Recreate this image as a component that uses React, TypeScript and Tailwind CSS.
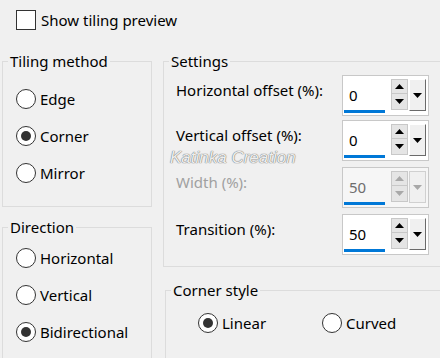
import type { ReactNode } from 'react'

const font = { fontFamily: '"Noto Sans", "Open Sans", sans-serif' }

function Radio({ label, checked }: { label: string; checked?: boolean }) {
  return (
    <div className="flex h-5 items-center gap-[4px]">
      <span className="flex h-5 w-5 shrink-0 items-center justify-center rounded-full border border-[#333333] bg-white">
        {checked && <span className="h-[10px] w-[10px] rounded-full bg-[#333333]" />}
      </span>
      <span className="text-[15px] leading-5 text-black">{label}</span>
    </div>
  )
}

// legend sits on the border; padding goes on the inner div so the title stays put
function Group({ title, className, inner, children }: { title: string; className?: string; inner?: string; children: ReactNode }) {
  return (
    <fieldset className={`border border-[#dcdcdc] ${className ?? ''}`}>
      <legend className="ml-[5px] px-[2px] text-[15px] leading-5 text-black">{title}</legend>
      <div className={inner}>{children}</div>
    </fieldset>
  )
}

function Tri({ up, color }: { up?: boolean; color: string }) {
  return (
    <svg width="9" height="5" viewBox="0 0 9 5">
      <polygon points={up ? '0,5 9,5 4.5,0' : '0,0 9,0 4.5,5'} fill={color} />
    </svg>
  )
}

function Spin({ value, disabled }: { value: string; disabled?: boolean }) {
  const arrow = disabled ? '#a8a8a8' : '#000000'
  return (
    <div className={`flex h-[41px] w-[87px] border border-[#c8c8c8] ${disabled ? 'bg-[#f6f6f6]' : 'bg-white'}`}>
      <div className="flex w-[48px] flex-col pl-[1px]">
        <span className={`flex-1 pl-[5px] pt-[9px] text-[15px] leading-5 ${disabled ? 'text-[#6d6d6d]' : 'text-black'}`}>
          {value}
        </span>
        <span className="mb-[2px] h-[3px] w-[41px] bg-[#0078d7]" />
      </div>
      <div className="mt-[3px] flex flex-col">
        <span className="flex h-[15px] w-[17px] items-center justify-center border border-[#c8c8c8] bg-[#e5e5e5]">
          <Tri up color={arrow} />
        </span>
        <span className="flex h-[16px] w-[17px] items-center justify-center border border-t-0 border-[#c8c8c8] bg-[#e5e5e5]">
          <Tri color={arrow} />
        </span>
      </div>
      <span
        className={`ml-[1px] mt-[3px] flex h-[32px] w-[17px] items-center justify-center border ${
          disabled ? 'border-[#d0d0d0] bg-[#f0f0f0]' : 'border-b-[#6a6a6a] border-l-white border-r-[#6a6a6a] border-t-white bg-[#f0f0f0]'
        }`}
      >
        <Tri color={arrow} />
      </span>
    </div>
  )
}

function SpinRow({ label, value, disabled, className }: { label: string; value: string; disabled?: boolean; className?: string }) {
  return (
    <div className={`flex items-start ${className ?? ''}`}>
      <span className={`mt-[5px] w-[166px] text-[15px] leading-5 ${disabled ? 'text-[#a0a0a0]' : 'text-black'}`}>{label}</span>
      <Spin value={value} disabled={disabled} />
    </div>
  )
}

export default function App() {
  return (
    <div className="relative h-[358px] w-[440px] overflow-hidden bg-[#f0f0f0]" style={font}>
      <div className="flex items-center gap-[5px] pl-[16px] pt-[10px]">
        <span className="h-5 w-5 border border-[#333333] bg-white" />
        <span className="text-[15px] leading-5 text-black">Show tiling preview</span>
      </div>

      <div className="mt-[21px] flex gap-[11px] pl-[2px]">
        <div className="flex w-[150px] shrink-0 flex-col gap-[10px]">
          <Group title="Tiling method" inner="flex flex-col gap-[17px] pb-[23px] pl-[13px] pt-[18px]">
            <Radio label="Edge" />
            <Radio label="Corner" checked />
            <Radio label="Mirror" />
          </Group>
          <Group title="Direction" className="h-[160px]" inner="flex flex-col gap-[17px] pl-[13px] pt-[11px]">
            <Radio label="Horizontal" />
            <Radio label="Vertical" />
            <Radio label="Bidirectional" checked />
          </Group>
        </div>

        <div className="flex w-[300px] shrink-0 flex-col gap-[13px]">
          <Group title="Settings" inner="pb-[11px] pl-[12px] pt-[4px]">
            <SpinRow label="Horizontal offset (%):" value="0" />
            <SpinRow label="Vertical offset (%):" value="0" className="mt-[4px]" />
            <SpinRow label="Width (%):" value="50" disabled className="mt-[6px]" />
            <SpinRow label="Transition (%):" value="50" className="mt-[6px]" />
          </Group>
          <Group title="Corner style" className="ml-[2px] h-[100px]" inner="flex pl-[32px] pt-[13px]">
            <div className="w-[124px]">
              <Radio label="Linear" checked />
            </div>
            <Radio label="Curved" />
          </Group>
        </div>
      </div>

      <span
        className="absolute left-[170px] top-[148px] text-[17px] italic leading-5 text-[#eeeeee]"
        style={{ fontFamily: '"Liberation Sans", sans-serif', textShadow: '0 0 1px #6e6e6e, 0 0 1px #6e6e6e' }}
      >
        Katinka Creation
      </span>
    </div>
  )
}
